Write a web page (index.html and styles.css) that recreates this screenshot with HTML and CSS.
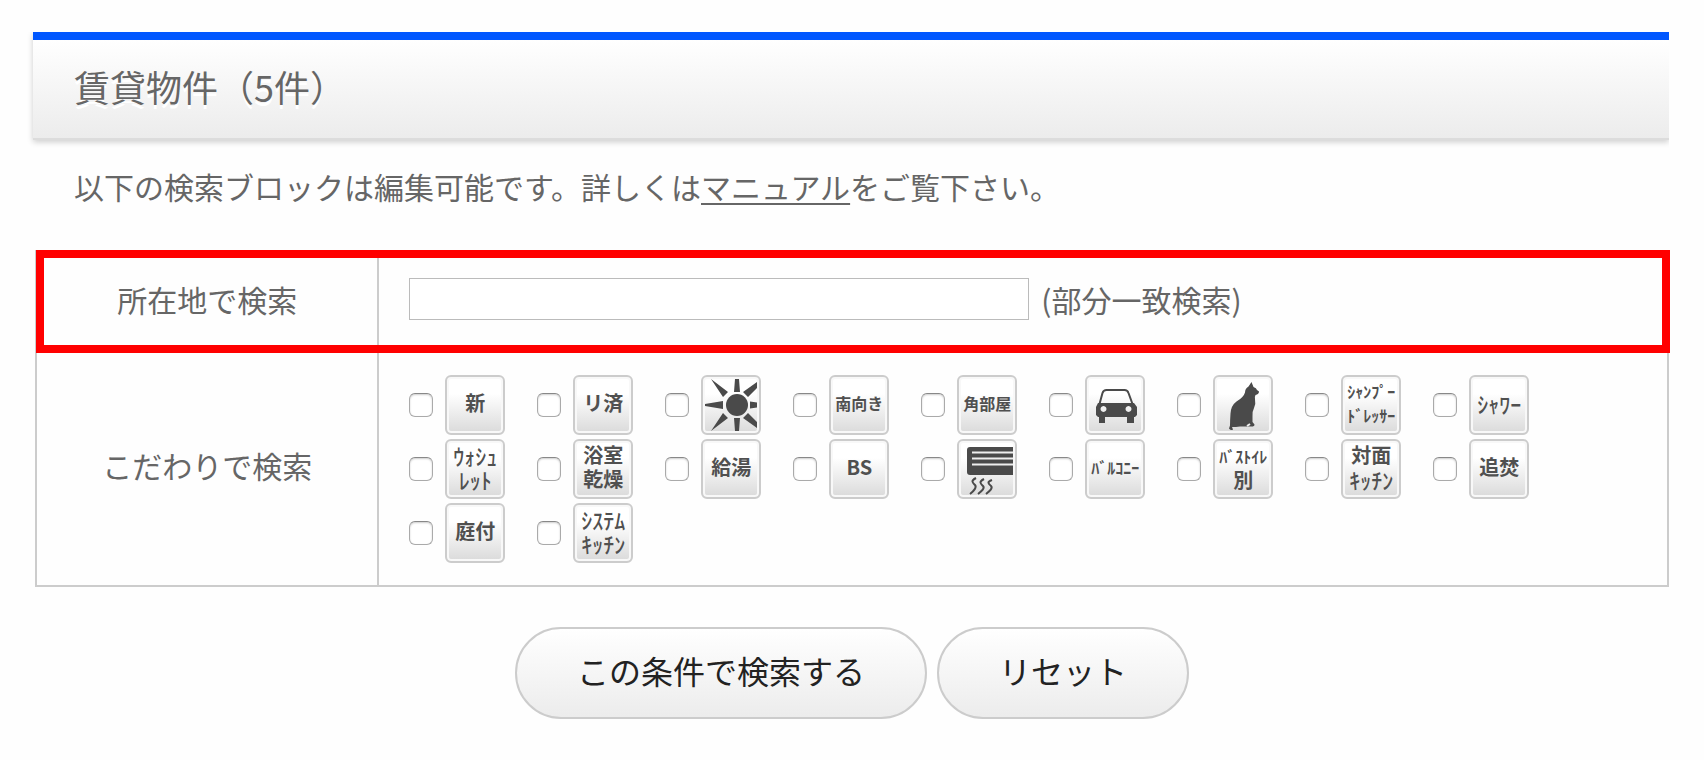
FILE: index.html
```html
<!DOCTYPE html>
<html lang="ja">
<head>
    <meta charset="UTF-8">
    <meta name="viewport" content="width=device-width, initial-scale=1.0">
    <title>賃貸物件</title>
    <link rel="stylesheet" href="styles.css">
</head>
<body>
    <main class="container">
        <h1 class="page-title">賃貸物件（5件）</h1>
        <p class="lead">以下の検索ブロックは編集可能です。詳しくは<a href="#manual">マニュアル</a>をご覧下さい。</p>

        <form>
            <table class="search-table">
                <tr class="highlight">
                    <th scope="row"><label for="address">所在地で検索</label></th>
                    <td>
                        <div class="address">
                            <input type="text" id="address" name="address">
                            <span>(部分一致検索)</span>
                        </div>
                    </td>
                </tr>
                <tr>
                    <th scope="row">こだわりで検索</th>
                    <td>
                        <div class="options">
                            <label class="option"><input type="checkbox" name="opt"><span class="tile">新</span></label>
                            <label class="option"><input type="checkbox" name="opt"><span class="tile">リ済</span></label>
                            <label class="option">
                                <input type="checkbox" name="opt" aria-label="日当たり">
                                <span class="tile">
                                    <svg viewBox="0 0 60 60">
                                        <circle cx="36" cy="30" r="11"/>
                                        <path d="M34 4h4l1 13h-6zM33 43h6l-1 13h-4zM4 29l18-3v8L4 31zM49 26.500l7 1v5l-7 1zM10 4l17 13-5 5zM10 56l12-18 5 5zM56 7v6l-9 9-5-5zM47 38l9 9v6l-14-10z"/>
                                    </svg>
                                </span>
                            </label>
                            <label class="option"><input type="checkbox" name="opt"><span class="tile small">南向き</span></label>
                            <label class="option"><input type="checkbox" name="opt"><span class="tile small">角部屋</span></label>
                            <label class="option">
                                <input type="checkbox" name="opt" aria-label="駐車場">
                                <span class="tile">
                                    <svg viewBox="0 0 60 60">
                                        <path class="line" d="M14.500 29l3-11q1-3 4-3h18q3 0 4 3l4 11"/>
                                        <path fill-rule="evenodd" d="M13 28h36l3 4v8l-2 2h-1v6h-7v-6H20v6h-6v-6h-1l-2-2v-8zM18.500 31a3 3 0 1 0 .01 0zM43.500 31a3 3 0 1 0 .01 0z"/>
                                    </svg>
                                </span>
                            </label>
                            <label class="option">
                                <input type="checkbox" name="opt" aria-label="ペット可">
                                <span class="tile">
                                    <svg viewBox="0 0 60 60">
                                        <path d="M38.500 7l2 5q3 1 3.500 3l2 1.500q0 2.500-3.500 3.500-1 2-.5 4 1 5-1 9-2 4-1.500 8v6l2 2.500q0 2-3 2H27q-4 .5-8 .5l1 2.500q-2 1.500-4-1l1-3q0-5 .5-12 .5-8 6-12 7-4 8.500-9 0-4 3.500-6z"/>
                                        <path class="cut" d="M37 49l-3 2"/>
                                    </svg>
                                </span>
                            </label>
                            <label class="option"><input type="checkbox" name="opt"><span class="tile small">ｼｬﾝﾌﾟｰ<br>ﾄﾞﾚｯｻｰ</span></label>
                            <label class="option"><input type="checkbox" name="opt"><span class="tile kana">ｼｬﾜｰ</span></label>
                            <label class="option"><input type="checkbox" name="opt"><span class="tile kana">ｳｫｼｭ<br>ﾚｯﾄ</span></label>
                            <label class="option"><input type="checkbox" name="opt"><span class="tile">浴室<br>乾燥</span></label>
                            <label class="option"><input type="checkbox" name="opt"><span class="tile">給湯</span></label>
                            <label class="option"><input type="checkbox" name="opt"><span class="tile">BS</span></label>
                            <label class="option">
                                <input type="checkbox" name="opt" aria-label="エアコン">
                                <span class="tile">
                                    <svg viewBox="0 0 60 60">
                                        <path d="M13 8h43v28H13q-3 0-3-3V11q0-3 3-3z"/>
                                        <path class="cut" d="M15 13.500h41M15 19.500h41M15 25.500h41"/>
                                        <path class="line" d="M19 39c-6 3-3 5-1 7s-1 6-5 9M27 40c-6 3-3 5-1 7s-1 5-5 8M35 41c-6 2-3 4-1 6s-1 5-5 8"/>
                                    </svg>
                                </span>
                            </label>
                            <label class="option"><input type="checkbox" name="opt"><span class="tile small">ﾊﾞﾙｺﾆｰ</span></label>
                            <label class="option"><input type="checkbox" name="opt"><span class="tile"><span class="small">ﾊﾞｽﾄｲﾚ</span><br>別</span></label>
                            <label class="option"><input type="checkbox" name="opt"><span class="tile">対面<br><span class="kana">ｷｯﾁﾝ</span></span></label>
                            <label class="option"><input type="checkbox" name="opt"><span class="tile">追焚</span></label>
                            <label class="option"><input type="checkbox" name="opt"><span class="tile">庭付</span></label>
                            <label class="option"><input type="checkbox" name="opt"><span class="tile kana">ｼｽﾃﾑ<br>ｷｯﾁﾝ</span></label>
                        </div>
                    </td>
                </tr>
            </table>

            <div class="buttons">
                <button type="submit">この条件で検索する</button>
                <button type="reset">リセット</button>
            </div>
        </form>
    </main>
</body>
</html>
```
FILE: styles.css
```css
* {
    box-sizing: border-box;
}
body {
    margin: 0;
    background-color: #fefefe;
    color: #666;
    font-family: "Noto Sans CJK JP", sans-serif;
    font-size: 30px;
    line-height: 44px;
}
.container {
    padding: 32px 35px 40px 33px;
}
.page-title {
    margin: 0;
    padding: 21px 41px 27px;
    border-top: 8px solid #0057ff;
    border-bottom: 2px solid #dcdcdc;
    background: linear-gradient(#fff, #ececec);
    box-shadow: 0 2px 6px rgba(0, 0, 0, 0.2);
    clip-path: inset(0 0 -10px -10px);
    font-size: 36px;
    font-weight: 400;
    line-height: 50px;
    text-shadow: 0 4px 0 #fff;
}
.lead {
    margin: 24px 41px 42px;
}
.lead a {
    color: #666;
    text-decoration: underline;
    text-decoration-thickness: 2px;
    text-underline-offset: 4px;
}
.search-table {
    width: calc(100% - 2px);
    margin-left: 2px;
    border: 2px solid #ccc;
    border-top: 0;
    border-spacing: 0;
    table-layout: fixed;
}
.search-table th,
.search-table td {
    padding: 22px 30px;
}
.search-table th {
    width: 21%;
    padding-top: 18px;
    padding-bottom: 26px;
    border-right: 2px solid #ccc;
    font-weight: 400;
    text-align: center;
}
/* red frame over the address row */
.highlight {
    position: relative;
}
.highlight th::after {
    content: "";
    position: absolute;
    inset: 0 -3px 0 -1px;
    border: 8px solid #f00;
    pointer-events: none;
}
.search-table .highlight th,
.search-table .highlight td {
    padding-top: 27px;
    padding-bottom: 32px;
}
.address {
    display: flex;
    align-items: center;
    gap: 12px;
}
.address input {
    flex: 0 1 620px;
    min-width: 0;
    height: 42px;
    padding: 4px 8px;
    border: 1px solid #bbb;
    background: #fff;
    color: #666;
    font: inherit;
}
.options {
    display: grid;
    grid-template-columns: repeat(auto-fill, 128px);
    row-gap: 4px;
}
.option {
    display: flex;
    align-items: center;
    gap: 12px;
}
.option input {
    appearance: none;
    width: 24px;
    height: 24px;
    margin: 0;
    border: 1px solid #aaa;
    border-top-color: #888;
    border-radius: 6px;
    background: #fff;
    box-shadow: inset 0 1px 2px rgba(0, 0, 0, 0.2);
}
.option input:checked {
    background: #0057ff;
}
.tile {
    width: 60px;
    height: 60px;
    padding: 14px 0;
    border: 2px solid #ccc;
    border-radius: 6px;
    background: linear-gradient(#fff 30%, #dadada);
    box-shadow: inset 0 0 0 2px #f8f8f8;
    color: #505050;
    font-size: 20px;
    font-weight: 700;
    line-height: 24px;
    text-align: center;
    white-space: nowrap;
}
.tile:has(br) {
    padding: 2px 0;
}
.tile:has(svg) {
    padding: 0;
}
.small {
    font-size: 16px;
}
.kana {
    font-size: 22px;
    font-weight: 500;
}
.tile svg {
    display: block;
    width: 60px;
    height: 60px;
    margin: -2px;
    fill: #4a4a4a;
}
.tile svg .line {
    fill: none;
    stroke: #4a4a4a;
    stroke-width: 2;
}
.tile svg .cut {
    fill: none;
    stroke: #eee;
    stroke-width: 2;
}
.buttons {
    display: flex;
    justify-content: center;
    gap: 10px;
    margin: 40px 0 0 2px;
}
.buttons button {
    padding: 19px 60px 25px;
    border: 2px solid #ccc;
    border-radius: 46px;
    background: linear-gradient(#fff, #ececec);
    color: #222;
    font-family: inherit;
    font-size: 32px;
    line-height: 44px;
    cursor: pointer;
}
```
